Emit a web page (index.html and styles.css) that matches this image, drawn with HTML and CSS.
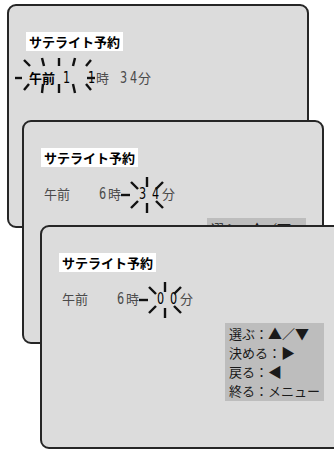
FILE: index.html
```html
<!DOCTYPE html>
<html lang="ja">

<head>
    <meta charset="UTF-8">
    <title>サテライト予約</title>
    <link rel="stylesheet" href="styles.css">
</head>

<body>
    <div class="desk">

        <!-- step 1 -->
        <div class="screen screen-1">
            <p class="title">サテライト予約</p>
            <div class="row">
                <span class="on s1-ampm">午前</span>
                <span class="on d s1-h1">1</span>
                <span class="on d s1-h2">1</span>
                <span class="s1-hu">時</span>
                <span class="d s1-m1">3</span>
                <span class="d s1-m2">4</span>
                <span class="s1-mu">分</span>
            </div>
            <svg class="blink" width="310" height="130">
                <g stroke="#111" stroke-width="2.4">
                    <line x1="6" y1="72" x2="13" y2="72" />
                    <line x1="78" y1="72" x2="86" y2="72" />
                    <line x1="15" y1="54" x2="21" y2="60" />
                    <line x1="33" y1="52" x2="35" y2="60" />
                    <line x1="50" y1="52" x2="50" y2="60" />
                    <line x1="66" y1="52" x2="64" y2="60" />
                    <line x1="82" y1="54" x2="77" y2="60" />
                    <line x1="15" y1="84" x2="20" y2="78" />
                    <line x1="34" y1="78" x2="33" y2="87" />
                    <line x1="50" y1="78" x2="50" y2="87" />
                    <line x1="64" y1="78" x2="66" y2="87" />
                    <line x1="77" y1="78" x2="82" y2="84" />
                </g>
            </svg>
        </div>

        <!-- step 2 -->
        <div class="screen screen-2">
            <p class="title">サテライト予約</p>
            <div class="row">
                <span class="ampm">午前</span>
                <span class="d hour">6</span>
                <span class="hu">時</span>
                <span class="on d m1">3</span>
                <span class="on d m2">4</span>
                <span class="mu">分</span>
            </div>
            <div class="help">
                <p>選ぶ：<span class="tri">▲</span>／<span class="tri">▼</span></p>
                <p>決める：<span class="tri">▶</span></p>
                <p>戻る：<span class="tri">◀</span></p>
                <p>終る：メニュー</p>
            </div>
            <svg class="blink" width="310" height="130">
                <g stroke="#111" stroke-width="2.4">
                    <line x1="97" y1="73" x2="106" y2="73" />
                    <line x1="123" y1="55" x2="123" y2="65" />
                    <line x1="123" y1="81" x2="123" y2="91" />
                    <line x1="107" y1="60" x2="114" y2="67" />
                    <line x1="132" y1="67" x2="139" y2="60" />
                    <line x1="107" y1="86" x2="114" y2="79" />
                    <line x1="132" y1="79" x2="139" y2="86" />
                </g>
            </svg>
        </div>

        <!-- step 3 -->
        <div class="screen screen-3">
            <p class="title">サテライト予約</p>
            <div class="row">
                <span class="ampm">午前</span>
                <span class="d hour">6</span>
                <span class="hu">時</span>
                <span class="on d m1">0</span>
                <span class="on d m2">0</span>
                <span class="mu">分</span>
            </div>
            <div class="help">
                <p>選ぶ：<span class="tri">▲</span>／<span class="tri">▼</span></p>
                <p>決める：<span class="tri">▶</span></p>
                <p>戻る：<span class="tri">◀</span></p>
                <p>終る：メニュー</p>
            </div>
            <svg class="blink" width="310" height="130">
                <g stroke="#111" stroke-width="2.4">
                    <line x1="97" y1="73" x2="106" y2="73" />
                    <line x1="123" y1="55" x2="123" y2="65" />
                    <line x1="123" y1="81" x2="123" y2="91" />
                    <line x1="107" y1="60" x2="114" y2="67" />
                    <line x1="132" y1="67" x2="139" y2="60" />
                    <line x1="107" y1="86" x2="114" y2="79" />
                    <line x1="132" y1="79" x2="139" y2="86" />
                </g>
            </svg>
        </div>

    </div>
</body>

</html>
```

FILE: styles.css
```css
body {
    margin: 0;
    background-color: #ffffff;
    font-family: "Noto Sans CJK JP", "Noto Sans", sans-serif;
    overflow: hidden;
}

:root {
    --screen-bg: #dcdcdc;
    --help-bg: #bdbdbd;
    --frame: #262626;
    --dim: #4a4a4a;
}

.desk {
    position: relative;
    width: 334px;
    height: 450px;
    overflow: hidden;
}

/* the three tv screens overlap like windows */
.screen {
    position: absolute;
    box-sizing: border-box;
    display: flex;
    flex-direction: column;
    align-items: flex-start;
    width: 302px;
    height: 224px;
    padding: 26px 0 0 17px;
    background-color: var(--screen-bg);
    border: 2px solid var(--frame);
    border-radius: 9px;
}

.screen-1 {
    left: 7px;
    top: 4px;
}

.screen-2 {
    left: 22px;
    top: 120px;
}

.screen-3 {
    left: 40px;
    top: 225px;
    width: 310px;
}

.title {
    margin: 0;
    padding: 0 3px;
    height: 19px;
    line-height: 19px;
    font-size: 13px;
    font-weight: bold;
    color: #000;
    background-color: #ffffff;
}

.row {
    display: flex;
    align-items: center;
    height: 20px;
    margin-top: 17px;
    font-size: 13px;
    color: var(--dim);
}

.row span {
    display: block;
    line-height: 20px;
}

.row .d {
    width: 7px;
    text-align: center;
    font-family: "DejaVu Sans", sans-serif;
    font-size: 16px;
    transform: scaleX(0.7);
}

.row .on {
    color: #000;
    font-weight: bold;
}

.row .d.on {
    font-weight: normal;
}

/* screen 1 row */
.s1-ampm { margin-left: 3px; }
.s1-h1 { margin-left: 7px; }
.s1-h2 { margin-left: 18px; }
.s1-hu { margin-left: 2px; }
.s1-m1 { margin-left: 10px; }
.s1-m2 { margin-left: 3px; }
.s1-mu { margin-left: 2px; }

/* screen 2 + 3 row */
.ampm { margin-left: 3px; }
.hour { margin-left: 28px; }
.hu { margin-left: 3px; }
.m1 { margin-left: 17px; }
.m2 { margin-left: 6px; }
.mu { margin-left: 4px; }

.help {
    box-sizing: border-box;
    width: 99px;
    height: 78px;
    margin: 14px 0 0 166px;
    padding: 1px 0 0 4px;
    background-color: var(--help-bg);
    font-size: 13px;
    color: #1a1a1a;
}

.help p {
    margin: 0;
    height: 19px;
    line-height: 19px;
    white-space: nowrap;
}

.help .tri {
    font-size: 14px;
}

.blink {
    position: absolute;
    left: 0;
    top: 0;
    pointer-events: none;
}
```
